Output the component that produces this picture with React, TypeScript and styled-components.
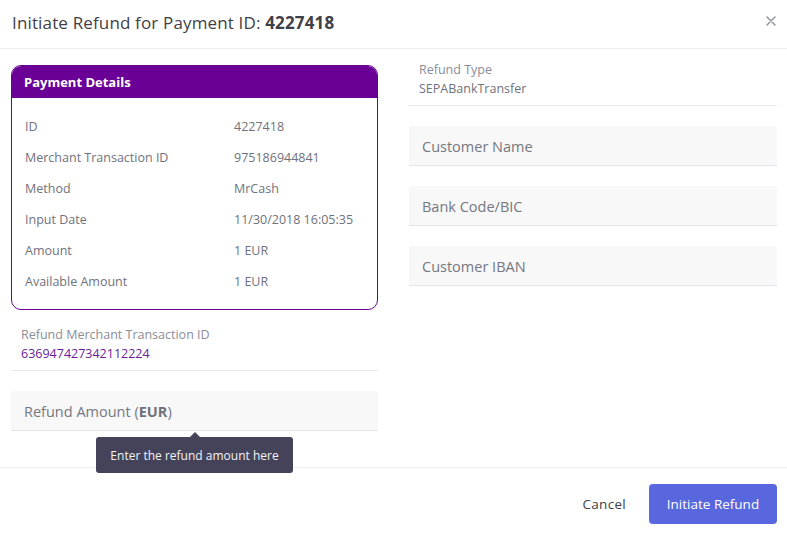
import styled, { createGlobalStyle } from "styled-components";

const GlobalStyle = createGlobalStyle`
  html, body {
    margin: 0;
    padding: 0;
    background: #ffffff;
  }
  body {
    font-family: "Open Sans", "Liberation Sans", sans-serif;
    color: #575962;
  }
  * {
    box-sizing: border-box;
  }
`;

type Detail = {
  label: string;
  value: string;
};

const details: Detail[] = [
  { label: "ID", value: "4227418" },
  { label: "Merchant Transaction ID", value: "975186944841" },
  { label: "Method", value: "MrCash" },
  { label: "Input Date", value: "11/30/2018 16:05:35" },
  { label: "Amount", value: "1 EUR" },
  { label: "Available Amount", value: "1 EUR" }
];

const App = () => {
  return (
    <>
      <GlobalStyle />
      <Modal>
        <Header>
          <Title>
            Initiate Refund for Payment ID: <strong>4227418</strong>
          </Title>
          <CloseButton aria-label="Close">
            <svg width="10" height="10" viewBox="0 0 10 10">
              <path
                d="M1 1 L9 9 M9 1 L1 9"
                stroke="#8a8c96"
                strokeWidth="1.4"
                strokeLinecap="round"
              />
            </svg>
          </CloseButton>
        </Header>

        <Body>
          <Column>
            <Card>
              <CardHeader>Payment Details</CardHeader>
              <CardBody>
                {details.map((d) => (
                  <DetailRow key={d.label}>
                    <span>{d.label}</span>
                    <span>{d.value}</span>
                  </DetailRow>
                ))}
              </CardBody>
            </Card>

            <StaticField>
              <FieldLabel>Refund Merchant Transaction ID</FieldLabel>
              <FieldValue $accent>636947427342112224</FieldValue>
            </StaticField>

            <InputWrap>
              <InputField>
                Refund Amount (<b>EUR</b>)
              </InputField>
              <Tooltip>Enter the refund amount here</Tooltip>
            </InputWrap>
          </Column>

          <Column>
            <StaticField>
              <FieldLabel>Refund Type</FieldLabel>
              <FieldValue>SEPABankTransfer</FieldValue>
            </StaticField>
            <InputField>Customer Name</InputField>
            <InputField>Bank Code/BIC</InputField>
            <InputField>Customer IBAN</InputField>
          </Column>
        </Body>

        <Footer>
          <CancelButton>Cancel</CancelButton>
          <PrimaryButton>Initiate Refund</PrimaryButton>
        </Footer>
      </Modal>
    </>
  );
};

export default App;

const Modal = styled.div`
  width: 787px;
  height: 537px;
  display: flex;
  flex-direction: column;
  background: #ffffff;
  overflow: hidden;
`;

const Header = styled.div`
  height: 49px;
  flex-shrink: 0;
  display: flex;
  align-items: center;
  justify-content: space-between;
  padding: 0 12px 4px 12px;
  border-bottom: 1px solid #ebedf2;
`;

const Title = styled.h3`
  margin: 0;
  font-size: 17px;
  font-weight: 400;
  color: #3f4047;
  letter-spacing: 0.15px;

  strong {
    font-weight: 700;
  }
`;

const CloseButton = styled.button`
  border: none;
  background: none;
  padding: 0;
  margin-right: -1px;
  margin-bottom: 3px;
  display: flex;
  align-items: center;
  cursor: pointer;
`;

const Body = styled.div`
  flex: 1;
  display: grid;
  grid-template-columns: 367px 368px;
  column-gap: 31px;
  padding: 10px 10px 0 11px;
`;

const Column = styled.div`
  display: flex;
  flex-direction: column;
  gap: 20px;
  align-items: stretch;
`;

const Card = styled.div`
  margin-top: 6px;
  margin-bottom: -6px;
  border: 1px solid #6a0096;
  border-radius: 10px;
  overflow: hidden;
`;

const CardHeader = styled.div`
  height: 33px;
  background: #6a0096;
  color: #ffffff;
  font-size: 13px;
  font-weight: 700;
  display: flex;
  align-items: center;
  padding: 0 13px;
  margin: -1px -1px 0 -1px;
`;

const CardBody = styled.div`
  padding: 13px 13px 12px 13px;
`;

const DetailRow = styled.div`
  display: grid;
  grid-template-columns: 209px 1fr;
  height: 31px;
  align-items: center;
  font-size: 12.5px;
  color: #6f727d;
`;

const StaticField = styled.div`
  padding: 1px 10px 7px 10px;
  border-bottom: 1px solid #e9e8f0;
  display: flex;
  flex-direction: column;
`;

const FieldLabel = styled.span`
  font-size: 12.5px;
  line-height: 20px;
  color: #8b8d97;
`;

const FieldValue = styled.span<{ $accent?: boolean }>`
  font-size: 12.5px;
  line-height: 18px;
  color: ${(p) => (p.$accent ? "#6a1b9a" : "#6f727d")};
`;

const InputWrap = styled.div`
  position: relative;
`;

const InputField = styled.div`
  height: 40px;
  background: #f8f8f9;
  border-bottom: 1px solid #e4e4ec;
  border-radius: 3px 3px 0 0;
  display: flex;
  align-items: center;
  padding: 1px 13px 0 13px;
  font-size: 14.5px;
  color: #75777f;

  b {
    font-weight: 700;
    color: #6f717a;
  }
`;

const Tooltip = styled.div`
  position: absolute;
  top: 46px;
  left: 85px;
  width: 197px;
  height: 36px;
  background: #45435a;
  color: #f3f3f6;
  font-size: 12px;
  border-radius: 3px;
  display: flex;
  align-items: center;
  justify-content: center;
  z-index: 2;

  &::before {
    content: "";
    position: absolute;
    top: -5px;
    left: 94px;
    border-left: 5px solid transparent;
    border-right: 5px solid transparent;
    border-bottom: 5px solid #45435a;
  }
`;

const Footer = styled.div`
  height: 70px;
  flex-shrink: 0;
  border-top: 1px solid #ebedf2;
  display: flex;
  align-items: center;
  justify-content: flex-end;
  gap: 12px;
  padding: 2px 10px 0 0;
`;

const CancelButton = styled.button`
  border: none;
  background: none;
  font-family: inherit;
  font-size: 13.5px;
  letter-spacing: 0.3px;
  color: #3f4047;
  padding: 0 11px;
  height: 40px;
  cursor: pointer;
`;

const PrimaryButton = styled.button`
  width: 128px;
  height: 40px;
  border: none;
  border-radius: 4px;
  background: #5867dd;
  color: #ffffff;
  font-family: inherit;
  font-size: 13.5px;
  cursor: pointer;
`;
